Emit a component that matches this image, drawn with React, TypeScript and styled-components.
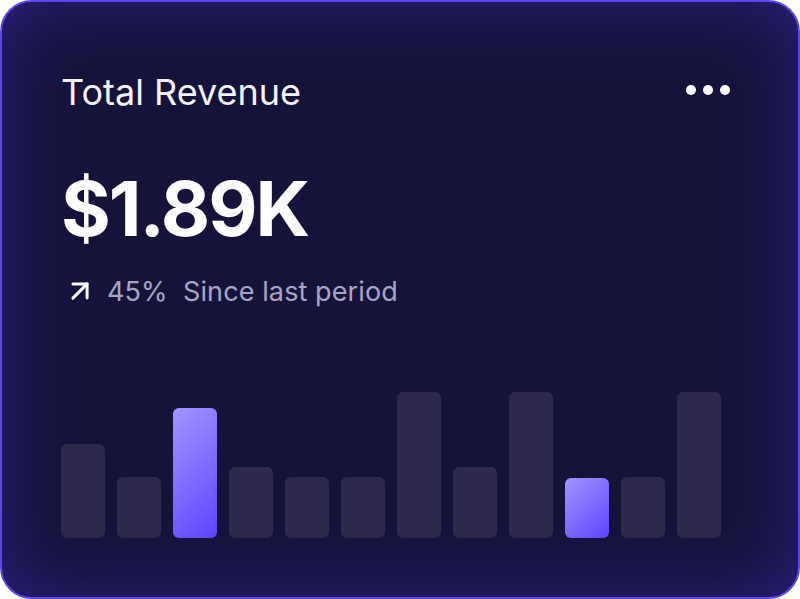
import React from 'react'
import styled, { createGlobalStyle } from 'styled-components'
import { ArrowUpRight } from 'lucide-react'

const GlobalStyle = createGlobalStyle`
  html, body {
    margin: 0;
    padding: 0;
    background: #ffffff;
  }
  #root {
    width: 800px;
    height: 599px;
  }
`

const Card = styled.div`
  box-sizing: border-box;
  width: 800px;
  height: 599px;
  border: 2px solid #5b46f2;
  border-radius: 32px;
  background: #16133b;
  box-shadow: inset 0 0 70px rgba(52, 36, 150, 0.75);
  padding: 68px 60px 59px 59px;
  display: flex;
  flex-direction: column;
  font-family: Inter, 'Noto Sans', sans-serif;
  color: #ffffff;
`

const Header = styled.div`
  display: flex;
  justify-content: space-between;
  align-items: center;
`

const Title = styled.h2`
  margin: 0;
  font-size: 36px;
  font-weight: 400;
  letter-spacing: 0;
  line-height: 44px;
  color: #f4f2ff;
`

const MenuDots = styled.div`
  display: flex;
  gap: 7px;
  margin-right: 8px;
  margin-bottom: 4px;
`

const Dot = styled.span`
  width: 10px;
  height: 10px;
  border-radius: 50%;
  background: #ffffff;
`

const Amount = styled.div`
  margin-top: 56px;
  font-size: 76px;
  font-weight: 700;
  letter-spacing: -2px;
  line-height: 1;
`

const Change = styled.div`
  margin-top: 28px;
  display: flex;
  align-items: center;
  gap: 10px;
  font-size: 27px;
  color: #a8a5c4;
  letter-spacing: 0.1px;

  svg {
    margin-left: 2px;
  }
`

const Chart = styled.div`
  margin-top: auto;
  display: flex;
  align-items: flex-end;
  gap: 12px;
  height: 150px;
`

const Bar = styled.div<{ $active?: boolean }>`
  width: 44px;
  border-radius: 6px;
  background: ${({ $active }) =>
    $active ? 'linear-gradient(135deg, #a395ff 0%, #5e43ff 100%)' : '#2c294d'};
`

const bars = [
  { h: 94 },
  { h: 61 },
  { h: 130, active: true },
  { h: 71 },
  { h: 61 },
  { h: 61 },
  { h: 146 },
  { h: 71 },
  { h: 146 },
  { h: 60, active: true },
  { h: 61 },
  { h: 146 },
]

export default function App() {
  return (
    <>
      <GlobalStyle />
      <Card>
        <Header>
          <Title>Total Revenue</Title>
          <MenuDots>
            <Dot />
            <Dot />
            <Dot />
          </MenuDots>
        </Header>
        <Amount>$1.89K</Amount>
        <Change>
          <ArrowUpRight size={34} strokeWidth={2.1} color="#ffffff" />
          <span>45%&nbsp; Since last period</span>
        </Change>
        <Chart>
          {bars.map((b, i) => (
            <Bar key={i} $active={b.active} style={{ height: b.h }} />
          ))}
        </Chart>
      </Card>
    </>
  )
}
